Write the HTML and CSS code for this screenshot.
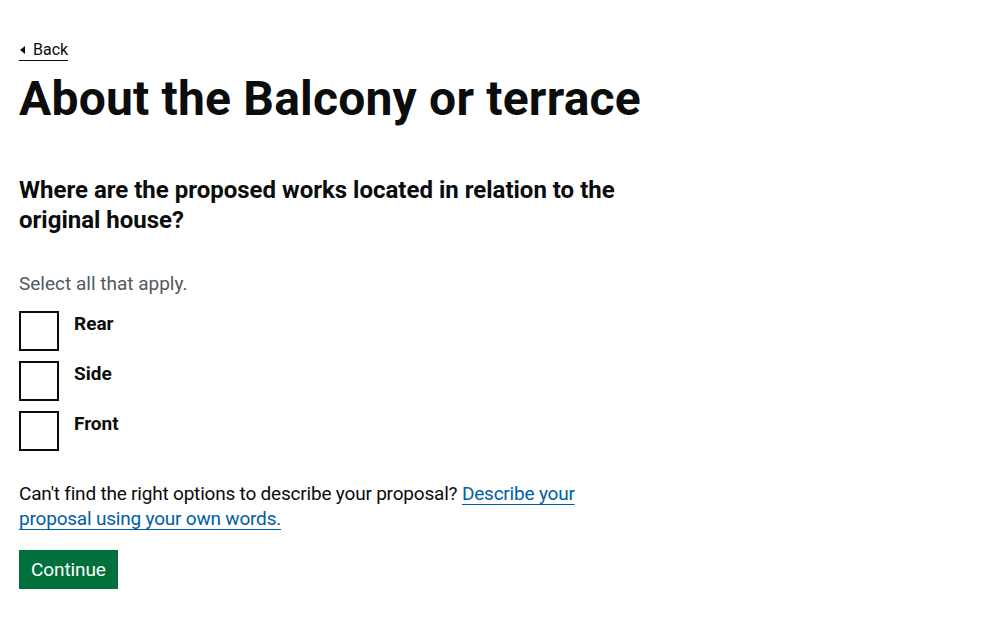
FILE: index.html
```html
<!DOCTYPE html>
<html lang="en">
<head>
<meta charset="utf-8">
<title>About the Balcony or terrace</title>
<link rel="stylesheet" href="styles.css">
</head>
<body>
<div class="page">
  <a class="back-link" href="#"><span class="back-arrow"></span>Back</a>
  <main class="main">
    <h1 class="heading-xl">About the Balcony or terrace</h1>
    <div class="column">
      <fieldset class="fieldset">
        <legend class="legend">Where are the proposed works located in relation to the original house?</legend>
        <div class="hint">Select all that apply.</div>
        <div class="checkboxes">
          <label class="checkbox"><input type="checkbox" class="checkbox-input"><span class="checkbox-box"></span><span class="checkbox-label">Rear</span></label>
          <label class="checkbox"><input type="checkbox" class="checkbox-input"><span class="checkbox-box"></span><span class="checkbox-label">Side</span></label>
          <label class="checkbox"><input type="checkbox" class="checkbox-input"><span class="checkbox-box"></span><span class="checkbox-label">Front</span></label>
        </div>
      </fieldset>
      <p class="body">Can't find the right options to describe your proposal? <a class="link" href="#">Describe your proposal using your own words.</a></p>
      <button class="button" type="button">Continue</button>
    </div>
  </main>
</div>
</body>
</html>
```
FILE: styles.css
```css
html, body {
  margin: 0;
  padding: 0;
  background: #ffffff;
  color: #0b0c0c;
  font-family: Roboto, "Liberation Sans", Arial, sans-serif;
}
.page {
  padding: 0 19px;
}
.back-link {
  display: inline-flex;
  align-items: center;
  margin-top: 40px;
  font-size: 16px;
  line-height: 20px;
  color: #0b0c0c;
  text-decoration: none;
  border-bottom: 1px solid #0b0c0c;
  padding-bottom: 0;
}
.back-arrow {
  display: inline-block;
  width: 0;
  height: 0;
  border-style: solid;
  border-width: 4px 5px 4px 0;
  border-color: transparent #0b0c0c transparent transparent;
  margin-left: 1px;
  margin-right: 8px;
}
.main {
  display: block;
}
.heading-xl {
  margin: 13px 0 51px;
  font-size: 48px;
  line-height: 50px;
  font-weight: 700;
  letter-spacing: 0.2px;
}
.column {
  width: 630px;
}
.fieldset {
  margin: 0;
  padding: 0;
  border: 0;
  min-width: 0;
}
.legend {
  padding: 0;
  margin-bottom: 15px;
  font-size: 24px;
  line-height: 30px;
  font-weight: 700;
}
.hint {
  margin-top: 21px;
  margin-bottom: 15px;
  font-size: 19px;
  line-height: 25px;
  color: #505a5f;
}
.checkboxes {
  display: flex;
  flex-direction: column;
  gap: 10px;
}
.checkbox {
  display: flex;
  align-items: flex-start;
  position: relative;
  cursor: pointer;
}
.checkbox-input {
  position: absolute;
  opacity: 0;
  width: 40px;
  height: 40px;
  margin: 0;
}
.checkbox-box {
  box-sizing: border-box;
  width: 40px;
  height: 40px;
  border: 2px solid #0b0c0c;
  flex: none;
}
.checkbox-label {
  padding: 0 15px 5px 15px;
  font-size: 19px;
  line-height: 25px;
  font-weight: 700;
}
.body {
  margin: 30px 0 19px;
  font-size: 19px;
  line-height: 25px;
  letter-spacing: -0.2px;
}
.link {
  color: #005ea5;
  text-decoration: underline;
  text-underline-offset: 4px;
  text-decoration-thickness: 1px;
}
.button {
  display: inline-block;
  box-sizing: border-box;
  margin: 0;
  padding: 8px 10px 8px;
  border: 2px solid transparent;
  border-radius: 0;
  background: #00703c;
  color: #ffffff;
  box-shadow: 0 2px 0 #002d18;
  font-family: inherit;
  font-size: 19px;
  line-height: 19px;
  font-weight: 400;
  letter-spacing: -0.1px;
  cursor: pointer;
}
```
